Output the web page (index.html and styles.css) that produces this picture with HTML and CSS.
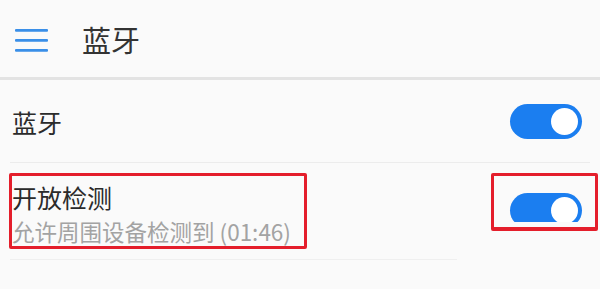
FILE: index.html
```html
<!DOCTYPE html>
<html lang="zh-CN">
<head>
<meta charset="utf-8">
<title>蓝牙</title>
<link rel="stylesheet" href="styles.css">
</head>
<body>
<header class="appbar">
  <svg class="menu-icon" width="33" height="24" viewBox="0 0 33 24">
    <rect x="0" y="1" width="33" height="2.8" rx="1" fill="#3a8fe8"/>
    <rect x="0" y="11" width="33" height="2.8" rx="1" fill="#3a8fe8"/>
    <rect x="0" y="21" width="33" height="2.8" rx="1" fill="#3a8fe8"/>
  </svg>
  <h1 class="appbar-title">蓝牙</h1>
</header>
<main class="list">
  <div class="row row-single">
    <span class="row-title">蓝牙</span>
    <span class="toggle"><span class="knob"></span></span>
  </div>
  <div class="row row-double">
    <div class="row-text">
      <div class="row-title">开放检测</div>
      <div class="row-sub">允许周围设备检测到 (01:46)</div>
    </div>
    <span class="toggle toggle-top"><span class="knob"></span></span>
    <span class="mark mark-text"></span>
    <span class="mark mark-toggle"></span>
  </div>
</main>
</body>
</html>
```

FILE: styles.css
```css
html, body {
  margin: 0;
  padding: 0;
  background: #fafafa;
  font-family: "Noto Sans CJK SC", "Noto Sans", "Liberation Sans", sans-serif;
}

.appbar {
  height: 77px;
  display: flex;
  align-items: center;
  padding-left: 15px;
  border-bottom: 3px solid #e3e3e3;
  background: #fafafa;
}

.menu-icon {
  display: block;
  margin-top: 2px;
}

.appbar-title {
  margin: 0 0 0 34px;
  font-size: 29px;
  font-weight: 400;
  color: #333;
  line-height: 32px;
}

.list {
  margin: 0 10px;
}

.row {
  position: relative;
  display: flex;
  justify-content: space-between;
  padding: 0 8px 0 2px;
  border-bottom: 1px solid #ececec;
}

.row-single {
  height: 82px;
  align-items: center;
}

.row-single .row-title {
  margin-top: 2px;
}

.row-double {
  height: 96px;
  align-items: flex-start;
  border-bottom-color: #efefef;
  margin-right: 133px;
  padding-right: 0;
}

.row-title {
  font-size: 25px;
  line-height: 30px;
  color: #2b2b2b;
}

.row-text {
  padding-top: 19px;
}

.row-sub {
  margin-top: 5px;
  font-size: 22.5px;
  line-height: 28px;
  color: #a3a3a3;
  white-space: nowrap;
}

.toggle {
  position: relative;
  width: 72px;
  height: 35px;
  border-radius: 18px;
  background: #1b7ef0;
  flex: none;
}

.toggle-top {
  position: absolute;
  top: 30px;
  right: -125px;
}

.knob {
  position: absolute;
  right: 4px;
  top: 4px;
  width: 27px;
  height: 27px;
  border-radius: 50%;
  background: #fff;
}

.mark {
  position: absolute;
  border: 3px solid #e41e2b;
  border-radius: 2px;
  box-sizing: border-box;
}

.mark-text {
  left: -1px;
  top: 10px;
  width: 298px;
  height: 76px;
}

.mark-toggle {
  top: 10px;
  right: -141px;
  width: 107px;
  height: 58px;
  border-bottom-width: 4px;
  box-shadow: inset 0 -5px 0 #fafafa;
}
```
